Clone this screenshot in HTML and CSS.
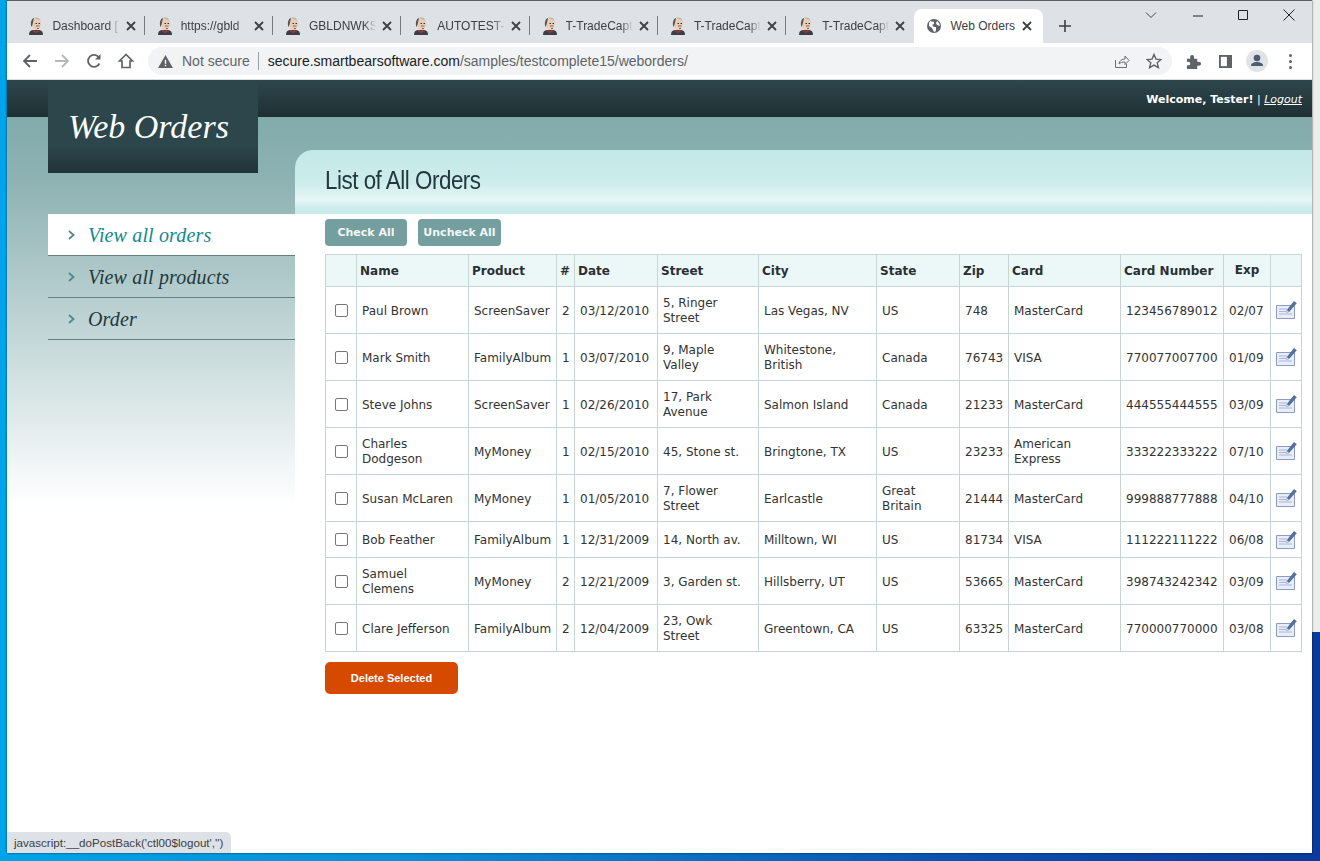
FILE: index.html
```html
<!DOCTYPE html>
<html>
<head>
<meta charset="utf-8">
<title>Web Orders</title>
<link rel="stylesheet" href="styles.css">
</head>
<body>
<svg class="defs" width="0" height="0">
  <symbol id="jenkins" viewBox="0 0 16 18">
    <path d="M1 18c0-3 1-4.500 4-5l6 0c3 .5 4 2 4 5z" fill="#3b3f4a"/>
    <path d="M6 13l2 1.500 2-1.500 1 1.500-3 1.500-3-1.500z" fill="#b5362f"/>
    <path d="M3.500 7c0-4 2-6 5-6s4.500 2 4.500 5.500c0 3-1.500 6.500-4.500 6.500-2.500 0-4-2.500-4.500-4.500z" fill="#e8cdb8"/>
    <path d="M3.500 10C2 6 3.500 1.500 6 1c-.5 1.500-.5 3-1 4.500-.3 1-.5 3-1.500 4.500z" fill="#55524e"/>
    <path d="M6 .8C8 0 11.500.5 12.500 3 10 2.500 7.500 2 6 .8z" fill="#b9b2aa"/>
    <path d="M8 9h3.500M9 11.500h2" stroke="#7a5a48" stroke-width=".9"/>
    <path d="M7.500 6.500h1.500M10.500 6.500h1.500" stroke="#333" stroke-width="1"/>
  </symbol>
  <symbol id="close" viewBox="0 0 10 10">
    <path d="M1 1l8 8M9 1l-8 8" stroke="#3c4043" stroke-width="1.800" fill="none"/>
  </symbol>
  <symbol id="edit" viewBox="0 0 21 18">
    <path d="M.5 4.500h18v13H.5z" fill="#e9edf7" stroke="#8d9bc4"/>
    <path d="M3 8h8M3 10.500h10M3 13h13" stroke="#a9b5d6"/>
    <path d="M10 12l.8-3L18 0l2.800 2.200L13 11z" fill="#54709f"/>
    <path d="M10 12l.8-3 2.200 2z" fill="#d6dded"/>
  </symbol>
  <symbol id="chevron" viewBox="0 0 7 10">
    <path d="M1 1l4.500 4L1 9" stroke="#4f8a8a" stroke-width="1.800" fill="none"/>
  </symbol>
</svg>

<div class="win-behind"></div>

<div class="window">
  <div class="tabstrip">
    <div class="tab"><svg class="favicon"><use href="#jenkins"/></svg><span class="tab-title">Dashboard [</span><svg class="tab-x"><use href="#close"/></svg></div>
    <div class="tab"><svg class="favicon"><use href="#jenkins"/></svg><span class="tab-title">https://gbld</span><svg class="tab-x"><use href="#close"/></svg></div>
    <div class="tab"><svg class="favicon"><use href="#jenkins"/></svg><span class="tab-title">GBLDNWKS</span><svg class="tab-x"><use href="#close"/></svg></div>
    <div class="tab"><svg class="favicon"><use href="#jenkins"/></svg><span class="tab-title">AUTOTEST-S</span><svg class="tab-x"><use href="#close"/></svg></div>
    <div class="tab"><svg class="favicon"><use href="#jenkins"/></svg><span class="tab-title">T-TradeCapt</span><svg class="tab-x"><use href="#close"/></svg></div>
    <div class="tab"><svg class="favicon"><use href="#jenkins"/></svg><span class="tab-title">T-TradeCapt</span><svg class="tab-x"><use href="#close"/></svg></div>
    <div class="tab tab-last"><svg class="favicon"><use href="#jenkins"/></svg><span class="tab-title">T-TradeCapt</span><svg class="tab-x"><use href="#close"/></svg></div>
    <div class="tab tab-active">
      <svg class="favicon globe" viewBox="0 0 16 16"><circle cx="8" cy="8" r="7" fill="#5f6368"/><path d="M4 3l4 1 0 2-2 1 2 2 2 0 0 4-2 1-2-4-3-2 0-3zM11 3l2 2 1 3-3-1-1-2z" fill="#fff"/></svg>
      <span class="tab-title">Web Orders</span><svg class="tab-x"><use href="#close"/></svg>
    </div>
    <svg class="new-tab" viewBox="0 0 12 12"><path d="M6 0v12M0 6h12" stroke="#3c4043" stroke-width="1.600"/></svg>
    <div class="win-controls">
      <svg viewBox="0 0 12 12" class="ctl-down"><path d="M1 3.500l5 5 5-5" stroke="#444" fill="none"/></svg>
      <svg viewBox="0 0 12 12" class="ctl-min"><path d="M1 6h10" stroke="#222"/></svg>
      <svg viewBox="0 0 12 12" class="ctl-max"><path d="M1.500 1.500h9v9h-9z" stroke="#222" fill="none"/></svg>
      <svg viewBox="0 0 12 12" class="ctl-close"><path d="M.5 .5l11 11M11.500 .5l-11 11" stroke="#222" fill="none"/></svg>
    </div>
  </div>

  <div class="toolbar">
    <svg class="nav-ic" viewBox="0 0 16 16"><path d="M15 8H2M8 2L2 8l6 6" stroke="#5f6368" stroke-width="1.800" fill="none"/></svg>
    <svg class="nav-ic" viewBox="0 0 16 16"><path d="M1 8h13M8 2l6 6-6 6" stroke="#b4b7bb" stroke-width="1.800" fill="none"/></svg>
    <svg class="nav-ic" viewBox="0 0 16 16"><path d="M13.500 10.500A6 6 0 1 1 13 4.500" stroke="#5f6368" stroke-width="1.800" fill="none"/><path d="M14.500 1v5.500H9z" fill="#5f6368"/></svg>
    <svg class="nav-ic" viewBox="0 0 16 16"><path d="M8 1.500L1.500 8H4v6.500h8V8h2.500z" stroke="#5f6368" stroke-width="1.700" fill="none"/></svg>
    <div class="omnibox">
      <svg class="warn" viewBox="0 0 16 14"><path d="M8 0l8 14H0z" fill="#5f6368"/><path d="M8 5v4.500M8 10.500v1.500" stroke="#fff" stroke-width="1.500"/></svg>
      <span class="not-secure">Not secure</span>
      <span class="omni-sep"></span>
      <span class="url"><b>secure.smartbearsoftware.com</b>/samples/testcomplete15/weborders/</span>
      <svg class="omni-ic share" viewBox="0 0 16 16"><path d="M1.500 7v7.500h11V11" stroke="#6a6d71" fill="none"/><path d="M5 11c.5-3.500 3-5 6-5V3l4 4.500-4 4V9c-2.500 0-4.500.5-6 2z" stroke="#6a6d71" fill="none"/></svg>
      <svg class="omni-ic star" viewBox="0 0 16 16"><path d="M8 1.500l2 4.600 5 .4-3.800 3.300 1.200 4.900L8 12.100l-4.400 2.600 1.200-4.900L1 6.500l5-.4z" stroke="#5f6368" stroke-width="1.400" fill="none"/></svg>
    </div>
    <svg class="tool-ic puzzle" viewBox="0 0 16 16"><path d="M1 5h3.500c-.5-3 .5-4 2-4s2.500 1 2 4H12v3.500c3-.5 4 .5 4 2s-1 2.500-4 2V16H1v-4c2.500.5 3.500-.5 3.500-1.700S3.500 8 1 8.500z" fill="#5f6368"/></svg>
    <svg class="tool-ic panel" viewBox="0 0 14 14"><path d="M0 0h14v14H0z" fill="#5f6368"/><path d="M2 2h6.500v10H2z" fill="#fff"/></svg>
    <svg class="avatar" viewBox="0 0 22 22"><circle cx="11" cy="11" r="11" fill="#e0e3e8"/><circle cx="11" cy="8" r="3.300" fill="#4d5b70"/><path d="M5 16c0-3 3-4 6-4s6 1 6 4z" fill="#4d5b70"/></svg>
    <div class="kebab"><i></i><i></i><i></i></div>
  </div>

  <div class="page">
    <div class="topbar">
      <span class="welcome"><b>Welcome, Tester!</b> | <a href="#">Logout</a></span>
    </div>
    <div class="logo">Web Orders</div>

    <div class="layout">
      <ul class="sidenav">
        <li class="current"><svg class="chev"><use href="#chevron"/></svg>View all orders</li>
        <li><svg class="chev"><use href="#chevron"/></svg>View all products</li>
        <li><svg class="chev"><use href="#chevron"/></svg>Order</li>
      </ul>

      <div class="content">
        <div class="content-head"><h2>List of All Orders</h2></div>
        <div class="content-body">
          <div class="btn-row">
            <a class="btn">Check All</a>
            <a class="btn btn-narrow">Uncheck All</a>
          </div>
          <table class="orders">
            <colgroup>
              <col class="c-check"><col class="c-name"><col class="c-product"><col class="c-num"><col class="c-date"><col class="c-street"><col class="c-city"><col class="c-state"><col class="c-zip"><col class="c-card"><col class="c-number"><col class="c-exp"><col class="c-edit">
            </colgroup>
            <tr>
              <th></th><th>Name</th><th>Product</th><th>#</th><th>Date</th><th>Street</th><th>City</th><th>State</th><th>Zip</th><th>Card</th><th>Card Number</th><th class="center">Exp</th><th></th>
            </tr>
            <tr>
              <td class="center"><span class="check"></span></td><td>Paul Brown</td><td>ScreenSaver</td><td>2</td><td>03/12/2010</td><td>5, Ringer Street</td><td>Las Vegas, NV</td><td>US</td><td>748</td><td>MasterCard</td><td>123456789012</td><td>02/07</td><td class="center"><svg class="edit"><use href="#edit"/></svg></td>
            </tr>
            <tr>
              <td class="center"><span class="check"></span></td><td>Mark Smith</td><td>FamilyAlbum</td><td>1</td><td>03/07/2010</td><td>9, Maple Valley</td><td>Whitestone, British</td><td>Canada</td><td>76743</td><td>VISA</td><td>770077007700</td><td>01/09</td><td class="center"><svg class="edit"><use href="#edit"/></svg></td>
            </tr>
            <tr>
              <td class="center"><span class="check"></span></td><td>Steve Johns</td><td>ScreenSaver</td><td>1</td><td>02/26/2010</td><td>17, Park Avenue</td><td>Salmon Island</td><td>Canada</td><td>21233</td><td>MasterCard</td><td>444555444555</td><td>03/09</td><td class="center"><svg class="edit"><use href="#edit"/></svg></td>
            </tr>
            <tr>
              <td class="center"><span class="check"></span></td><td>Charles Dodgeson</td><td>MyMoney</td><td>1</td><td>02/15/2010</td><td>45, Stone st.</td><td>Bringtone, TX</td><td>US</td><td>23233</td><td>American Express</td><td>333222333222</td><td>07/10</td><td class="center"><svg class="edit"><use href="#edit"/></svg></td>
            </tr>
            <tr>
              <td class="center"><span class="check"></span></td><td>Susan McLaren</td><td>MyMoney</td><td>1</td><td>01/05/2010</td><td>7, Flower Street</td><td>Earlcastle</td><td>Great Britain</td><td>21444</td><td>MasterCard</td><td>999888777888</td><td>04/10</td><td class="center"><svg class="edit"><use href="#edit"/></svg></td>
            </tr>
            <tr>
              <td class="center"><span class="check"></span></td><td>Bob Feather</td><td>FamilyAlbum</td><td>1</td><td>12/31/2009</td><td>14, North av.</td><td>Milltown, WI</td><td>US</td><td>81734</td><td>VISA</td><td>111222111222</td><td>06/08</td><td class="center"><svg class="edit"><use href="#edit"/></svg></td>
            </tr>
            <tr>
              <td class="center"><span class="check"></span></td><td>Samuel Clemens</td><td>MyMoney</td><td>2</td><td>12/21/2009</td><td>3, Garden st.</td><td>Hillsberry, UT</td><td>US</td><td>53665</td><td>MasterCard</td><td>398743242342</td><td>03/09</td><td class="center"><svg class="edit"><use href="#edit"/></svg></td>
            </tr>
            <tr>
              <td class="center"><span class="check"></span></td><td>Clare Jefferson</td><td>FamilyAlbum</td><td>2</td><td>12/04/2009</td><td>23, Owk Street</td><td>Greentown, CA</td><td>US</td><td>63325</td><td>MasterCard</td><td>770000770000</td><td>03/08</td><td class="center"><svg class="edit"><use href="#edit"/></svg></td>
            </tr>
          </table>
          <a class="btn-delete">Delete Selected</a>
        </div>
      </div>
    </div>

    <div class="status">javascript:__doPostBack('ctl00$logout','')</div>
  </div>
</div>
</body>
</html>
```

FILE: styles.css
```css
html, body { margin: 0; height: 100%; }

body {
  position: relative;
  overflow: hidden;
  font-family: "DejaVu Sans", sans-serif;
  background: linear-gradient(90deg, #00a4ea 0, #0a8fd8 30%, #0a4fae 75%, #0a3a9c 100%);
}

.defs { position: absolute; }

/* bit of another window showing right of the browser */
.win-behind {
  position: absolute;
  top: 0;
  right: 0;
  width: 8px;
  height: 632px;
  background: #eceded;
}

.window {
  position: absolute;
  left: 7px;
  top: 0;
  width: 1305px;
  height: 853px;
  display: flex;
  flex-direction: column;
  border-top: 1px solid #5b6064;
  box-sizing: border-box;
  background: #fff;
  box-shadow: 0 0 2px rgba(0,0,0,.7);
}

/* tab strip */
.tabstrip {
  height: 42px;
  flex: none;
  display: flex;
  align-items: flex-end;
  padding-left: 9.4px;
  background: #dee1e6;
  position: relative;
}

.tab {
  width: 128.3px;
  height: 34px;
  flex: none;
  box-sizing: border-box;
  display: flex;
  align-items: center;
  padding: 0 9px 0 12px;
  position: relative;
}

.tab::after {
  content: "";
  position: absolute;
  right: 0;
  top: 7px;
  height: 19px;
  width: 1px;
  background: #777b80;
}

.tab-last::after, .tab-active::after { display: none; }

.tab-active {
  width: 129px;
  background: #fff;
  border-radius: 8px 8px 0 0;
  padding-right: 11px;
}

.favicon { width: 16px; height: 18px; flex: none; }
.globe { height: 16px; }

.tab-title {
  flex: 1;
  min-width: 0;
  margin-left: 8px;
  font: 12px "Liberation Sans", sans-serif;
  color: #3c4043;
  white-space: nowrap;
  -webkit-mask-image: linear-gradient(90deg, #000 82%, transparent 100%);
  mask-image: linear-gradient(90deg, #000 82%, transparent 100%);
}

.tab-active .tab-title { -webkit-mask-image: none; mask-image: none; }

.tab-x { width: 10px; height: 10px; flex: none; margin-left: 6px; }

.new-tab {
  width: 12px;
  height: 12px;
  position: absolute;
  left: 1052px;
  top: 19px;
}

.win-controls svg { position: absolute; width: 12px; height: 12px; }
.ctl-down { left: 1138px; top: 8px; }
.ctl-min { left: 1185px; top: 9px; }
.ctl-max { left: 1230px; top: 8px; }
.ctl-close { left: 1276px; top: 8px; }

/* toolbar */
.toolbar {
  height: 37px;
  flex: none;
  box-sizing: border-box;
  border-bottom: 1px solid #dadce0;
  display: flex;
  align-items: center;
  padding-left: 15px;
}

.nav-ic { width: 16px; height: 16px; flex: none; margin-right: 16px; }

.omnibox {
  width: 1024px;
  height: 28px;
  margin-left: -2px;
  flex: none;
  box-sizing: border-box;
  padding-left: 10px;
  display: flex;
  align-items: center;
  background: #f1f3f4;
  border-radius: 14px;
  font: 14px "Liberation Sans", sans-serif;
}

.warn { width: 15px; height: 13px; flex: none; }
.not-secure { margin-left: 9px; color: #5f6368; }
.omni-sep { width: 1px; height: 18px; margin: 0 9px 0 8px; background: #9aa0a6; }
.url { color: #5f6368; flex: 1; white-space: nowrap; }
.url b { font-weight: normal; color: #202124; }
.omni-ic { width: 16px; height: 16px; flex: none; }
.share { margin-right: 16px; }
.star { margin-right: 10px; }

.tool-ic { flex: none; }
.puzzle { width: 15px; height: 15px; margin-left: 14px; }
.panel { width: 13px; height: 13px; margin-left: 18px; }
.avatar { width: 22px; height: 22px; flex: none; margin-left: 14px; }

.kebab {
  margin-left: 21px;
  display: flex;
  flex-direction: column;
  gap: 3px;
}

.kebab i { width: 3px; height: 3px; border-radius: 50%; background: #5f6368; }

/* page */
.page {
  flex: 1;
  position: relative;
  overflow: hidden;
  background: linear-gradient(180deg, #82abab 37px, #8eb2b3 100px, #c5d8d9 260px, #ffffff 425px);
}

.topbar {
  height: 37px;
  box-sizing: border-box;
  padding: 13px 10px 0 0;
  text-align: right;
  font: 11px "DejaVu Sans", sans-serif;
  color: #fff;
  background: linear-gradient(180deg, #2d464c, #1e3034);
}

.welcome a { color: #fff; text-decoration: underline; font-style: italic; }

.logo {
  position: absolute;
  left: 41px;
  top: 0;
  width: 210px;
  height: 93px;
  box-sizing: border-box;
  padding: 28px 0 0 20px;
  font: italic 34px "Liberation Serif", serif;
  letter-spacing: 0;
  color: #fff;
  background: linear-gradient(180deg, #2d464c 70%, #203337);
}

.layout {
  display: flex;
  padding-left: 41px;
  position: relative;
}

.sidenav {
  list-style: none;
  width: 247px;
  flex: none;
  margin: 97px 0 0;
  padding: 0;
  font: italic 20px "Liberation Serif", serif;
  letter-spacing: .15px;
  color: #25383c;
}

.sidenav li {
  height: 42px;
  box-sizing: border-box;
  border-bottom: 1px solid #648080;
  display: flex;
  align-items: center;
  padding: 1px 0 0 20px;
}

.sidenav .current { background: #fff; color: #118a8e; }

.chev { width: 7px; height: 10px; flex: none; margin-right: 13px; }

.content {
  flex: 1;
  margin-top: 33px;
  position: relative;
}

.content-head {
  height: 64px;
  box-sizing: border-box;
  padding: 15px 0 0 30px;
  border-radius: 18px 0 0 0;
  background: linear-gradient(180deg, #c3e9e8 0, #cdecec 50%, #e7f6f6 78%, #c9ebea 92%);
}

.content-head h2 {
  margin: 0;
  font: normal 26px "Liberation Sans", sans-serif;
  letter-spacing: -.55px;
  color: #22383e;
  transform: scaleX(.86);
  transform-origin: left;
}

.content-body {
  background: #fff;
  padding: 5px 10px 0 30px;
}

.btn-row { display: flex; gap: 11px; height: 35px; }

.btn {
  width: 82px;
  height: 27px;
  box-sizing: border-box;
  text-align: center;
  font: bold 11px/27px "DejaVu Sans", sans-serif;
  color: #f1f6f6;
  background: #759e9f;
  border-radius: 4px;
}

.btn-narrow { width: 83px; }

.orders {
  width: 976px;
  table-layout: fixed;
  border-collapse: collapse;
  font-size: 12px;
  line-height: 15px;
  color: #333;
}

.c-check { width: 31px; }
.c-name { width: 112px; }
.c-product { width: 88px; }
.c-num { width: 18px; }
.c-date { width: 83px; }
.c-street { width: 101px; }
.c-city { width: 118px; }
.c-state { width: 83px; }
.c-zip { width: 49px; }
.c-card { width: 112px; }
.c-number { width: 103px; }
.c-exp { width: 47px; }
.c-edit { width: 31px; }

.orders th, .orders td {
  border: 1px solid #c6d5d6;
  padding: 4px 6px 2px 5px;
  text-align: left;
  vertical-align: middle;
}

.orders th {
  height: 25px;
  padding: 4px 0 2px 3px;
  font-size: 12px;
  color: #2a2f33;
  background: #ecf8f7;
}

.orders td { height: 40px; }

.orders tr:nth-child(7) td { height: 29px; }

.orders .center { text-align: center; padding: 0; }

.check {
  display: inline-block;
  width: 11px;
  height: 11px;
  vertical-align: middle;
  border: 1px solid #767676;
  border-radius: 2px;
  background: #fff;
}

.edit { width: 21px; height: 18px; display: inline-block; vertical-align: middle; }

.btn-delete {
  display: block;
  width: 133px;
  height: 32px;
  margin-top: 10px;
  text-align: center;
  font: bold 11px/32px "Liberation Sans", sans-serif;
  color: #fff;
  background: #d64a00;
  border-radius: 5px;
}

.status {
  position: absolute;
  left: 0;
  bottom: 0;
  height: 21px;
  padding: 0 8px 0 7px;
  border-radius: 0 5px 0 0;
  font: 11.6px/22px "Liberation Sans", sans-serif;
  color: #3c4043;
  background: #dee1e6;
}
```
